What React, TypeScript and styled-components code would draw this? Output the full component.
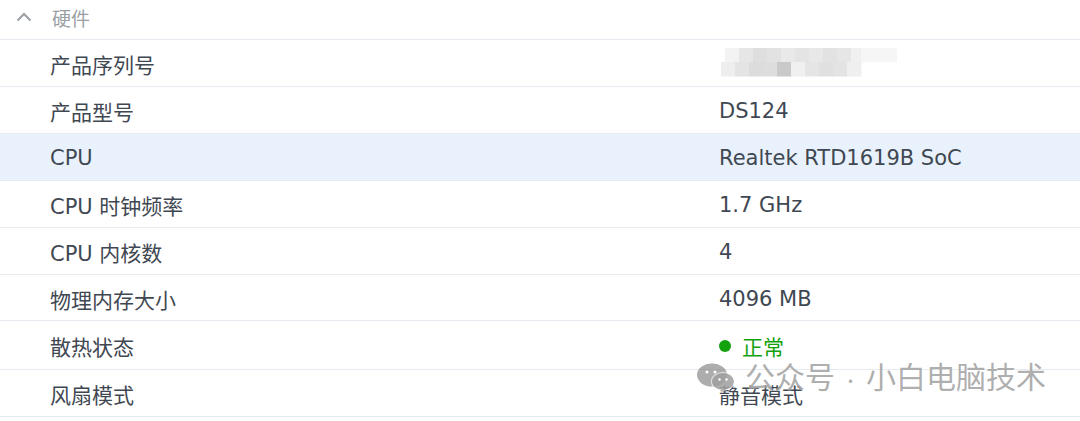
import React from "react";
import styled, { createGlobalStyle } from "styled-components";

const Global = createGlobalStyle`
  html, body { margin: 0; padding: 0; background: #ffffff; }
  body { font-family: "DejaVu Sans", "Noto Sans CJK SC", sans-serif; }
`;

const Page = styled.div`
  position: relative;
  width: 1080px;
  height: 421px;
  overflow: hidden;
  background: #ffffff;
`;

const Header = styled.div`
  display: flex;
  align-items: center;
  height: 40px;
  padding-left: 16px;
  padding-bottom: 5px;
  gap: 20px;
  border-bottom: 1px solid #e6ebf1;
  box-sizing: border-box;
  color: #9a9fa5;
  font-size: 19px;
  font-family: "Noto Sans CJK SC", sans-serif;
`;

const Row = styled.div<{ $active?: boolean; $h?: number }>`
  display: grid;
  grid-template-columns: 669px 1fr;
  align-items: center;
  height: ${(p) => p.$h ?? 47}px;
  box-sizing: border-box;
  padding-left: 50px;
  padding-top: 2px;
  border-bottom: 1px solid #e6ebf1;
  background: ${(p) => (p.$active ? "#e9f2fc" : "#ffffff")};
  color: #3f4852;
  font-size: 21px;
  font-family: "DejaVu Sans", "Noto Sans CJK SC", sans-serif;
`;

const Cell = styled.div`
  display: flex;
  align-items: center;
  gap: 11px;
  white-space: nowrap;
`;

const Status = styled.span`
  color: #13a10e;
  font-family: "Noto Sans CJK SC", sans-serif;
`;

const Dot = styled.span`
  width: 12px;
  height: 12px;
  border-radius: 50%;
  background: #13a10e;
`;

const Watermark = styled.div`
  position: absolute;
  left: 696px;
  top: 358px;
  display: flex;
  align-items: center;
  gap: 9px;
  color: rgba(105, 105, 105, 0.55);
  font-size: 30px;
  line-height: 34px;
  font-family: "Noto Sans CJK SC", sans-serif;
  text-shadow: 0 0 1px rgba(255, 255, 255, 0.8);
  pointer-events: none;
`;

const WmDot = styled.span`
  display: inline-block;
  width: 31px;
  text-align: center;
  font-size: 16px;
  vertical-align: middle;
`;

const Chevron = () => (
  <svg width="16" height="10" viewBox="0 0 16 10">
    <path d="M1.5 8.5 L8 2 L14.5 8.5" fill="none" stroke="#9a9fa5" strokeWidth="2" />
  </svg>
);

const Mosaic = () => {
  const cols = [
    ["#f3f3f3", "#e6e6e6", "#dedede", "#e2e2e2", "#e9e9e9", "#e4e4e4", "#e8e8e8", "#e2e2e2", "#e6e6e6", "#f0f0f0"],
    ["#eeeeee", "#e4e4e4", "#dcdcdc", "#dddddd", "#c9c9c9", "#f0f0f0", "#e5e5e5", "#e0e0e0", "#e3e3e3", "#efefef"],
  ];
  const s = 14;
  return (
    <svg width="180" height="32" viewBox="0 0 180 32" style={{ marginLeft: 2 }}>
      {cols.map((r, y) =>
        r.map((c, x) => (
          <rect key={`${x}-${y}`} x={x * s + (y === 0 ? 4 : 0)} y={y * s} width={s + 0.5} height={s + 0.5} fill={c} />
        ))
      )}
      <rect x="140" y="0" width="36" height="14" fill="#f6f6f6" />
    </svg>
  );
};

const WeChat = () => (
  <svg width="40" height="28" viewBox="0 0 40 28">
    <ellipse cx="16" cy="12" rx="15" ry="11.5" fill="rgba(105,105,105,0.55)" />
    <ellipse cx="27" cy="18.5" rx="12" ry="9.5" fill="rgba(255,255,255,0.7)" />
    <ellipse cx="27" cy="18.5" rx="11" ry="8.5" fill="rgba(105,105,105,0.55)" />
    <circle cx="11" cy="9" r="1.5" fill="#fff" />
    <circle cx="19" cy="9" r="1.5" fill="#fff" />
    <circle cx="23.5" cy="16.5" r="1.2" fill="#fff" />
    <circle cx="30.5" cy="16.5" r="1.2" fill="#fff" />
  </svg>
);

const rows: { label: string; value: React.ReactNode; active?: boolean; h?: number }[] = [
  { label: "产品序列号", value: <Mosaic /> },
  { label: "产品型号", value: "DS124" },
  { label: "CPU", value: "Realtek RTD1619B SoC", active: true },
  { label: "CPU 时钟频率", value: "1.7 GHz" },
  { label: "CPU 内核数", value: "4" },
  { label: "物理内存大小", value: "4096 MB", h: 46 },
  {
    label: "散热状态",
    value: (
      <>
        <Dot />
        <Status>正常</Status>
      </>
    ),
    h: 49,
  },
  { label: "风扇模式", value: "静音模式" },
];

export default function App() {
  return (
    <Page>
      <Global />
      <Header>
        <Chevron />
        <span>硬件</span>
      </Header>
      {rows.map((r) => (
        <Row key={r.label} $active={r.active} $h={r.h}>
          <Cell>{r.label}</Cell>
          <Cell>{r.value}</Cell>
        </Row>
      ))}
      <Watermark>
        <WeChat />
        <span>
          公众号<WmDot>·</WmDot>小白电脑技术
        </span>
      </Watermark>
    </Page>
  );
}
